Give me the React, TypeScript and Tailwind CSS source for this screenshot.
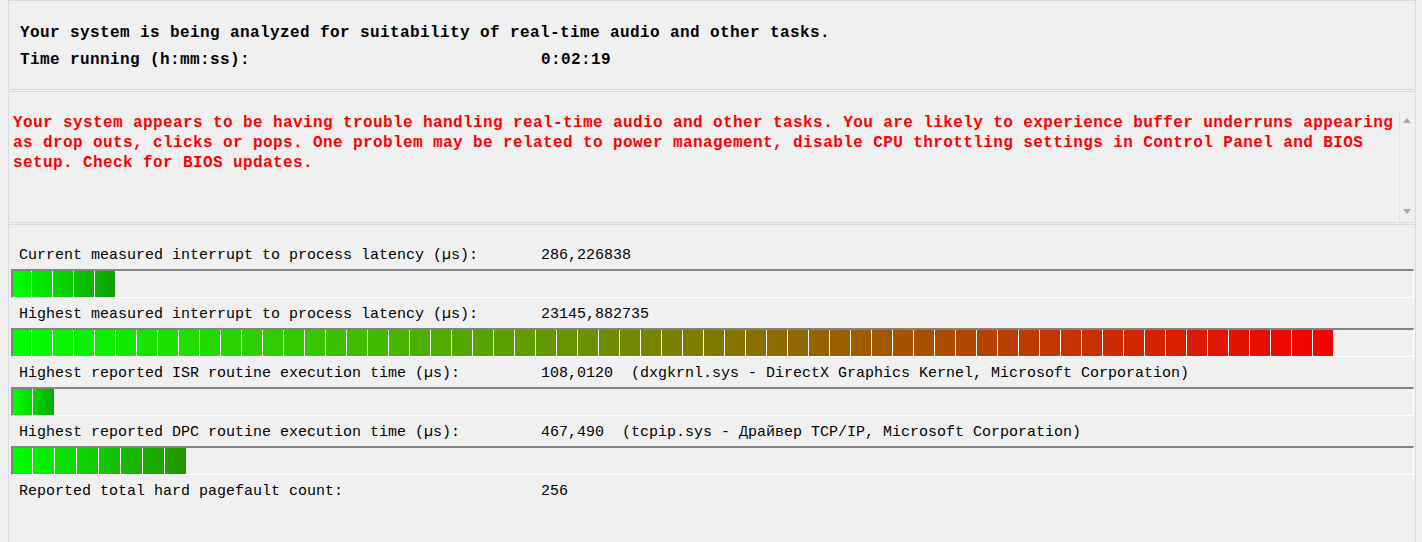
import React from "react";

type RGB = [number, number, number];

type BarSpec = { pitch: number; count: number; from: RGB; to: RGB };

const lerp = (a: RGB, b: RGB, t: number): string => {
  const c = a.map((v, i) => Math.round(v + (b[i] - v) * t));
  return `rgb(${c[0]},${c[1]},${c[2]})`;
};

function Bar({ spec }: { spec: BarSpec }) {
  const total = spec.count * spec.pitch - 3;
  const segs: { x0: number; w: number }[] = [];
  let x = 0;
  for (let k = 0; k < spec.count; k++) {
    const w = k === 0 ? spec.pitch - 3 : spec.pitch - 1;
    segs.push({ x0: x, w });
    x += w + 1;
  }
  return (
    <div className="mx-[2px] mr-[1px] h-[29px] border-t-2 border-l-2 border-t-[#828282] border-l-[#828282] border-b border-r border-b-white border-r-white bg-[#f0f0f0]">
      <div className="flex h-full gap-px bg-white" style={{ width: total }}>
        {segs.map((s, i) => (
          <div
            key={i}
            className="h-full shrink-0"
            style={{
              width: s.w,
              background: `linear-gradient(to right, ${lerp(spec.from, spec.to, s.x0 / total)}, ${lerp(
                spec.from,
                spec.to,
                (s.x0 + s.w) / total
              )})`,
            }}
          />
        ))}
      </div>
    </div>
  );
}

function Row({ label, value }: { label: string; value: string }) {
  return (
    <div className="flex h-[30px] items-center pl-[10px] pt-[2px] text-[15px] leading-none text-black whitespace-pre">
      <div className="w-[522px] shrink-0">{label}</div>
      <div>{value}</div>
    </div>
  );
}

function Triangle({ up }: { up: boolean }) {
  return (
    <svg width="8" height="5" viewBox="0 0 8 5" className="block">
      {up ? <polygon points="0,5 8,5 4,0" fill="#a6a6a6" /> : <polygon points="0,0 8,0 4,5" fill="#a6a6a6" />}
    </svg>
  );
}

export default function App() {
  const green: RGB = [0, 255, 0];
  const bars: BarSpec[] = [
    { pitch: 21, count: 5, from: green, to: [18, 158, 0] },
    { pitch: 21, count: 63, from: green, to: [245, 0, 0] },
    { pitch: 22, count: 2, from: green, to: [4, 172, 0] },
    { pitch: 22, count: 8, from: green, to: [36, 150, 0] },
  ];
  const rows = [
    { label: "Current measured interrupt to process latency (µs):", value: "286,226838" },
    { label: "Highest measured interrupt to process latency (µs):", value: "23145,882735" },
    {
      label: "Highest reported ISR routine execution time (µs):",
      value: "108,0120  (dxgkrnl.sys - DirectX Graphics Kernel, Microsoft Corporation)",
    },
    {
      label: "Highest reported DPC routine execution time (µs):",
      value: "467,490  (tcpip.sys - Драйвер TCP/IP, Microsoft Corporation)",
    },
  ];

  return (
    <div className="h-[542px] w-[1422px] overflow-hidden bg-[#f0f0f0] font-['Liberation_Mono','Courier_New',monospace] text-black">
      <div className="ml-[8px] flex w-[1408px] flex-col gap-px">
        {/* Top panel */}
        <div className="h-[90px] border border-[#d3dde5] pl-[11px] pt-[18px] text-[16px] font-bold tracking-[0.4px]">
          <div className="flex h-[27px] items-center whitespace-pre">
            Your system is being analyzed for suitability of real-time audio and other tasks.
          </div>
          <div className="flex h-[27px] items-center whitespace-pre">
            <div className="w-[521px] shrink-0">Time running (h:mm:ss):</div>
            <div>0:02:19</div>
          </div>
        </div>

        {/* Red message panel */}
        <div className="h-[132px] border border-[#d3dde5] px-[1px] pt-[19px]">
          <div className="flex h-[110px]">
            <div className="flex-1 pl-[3px] pt-[2px] text-[16px] font-bold leading-[20px] tracking-[0.4px] text-[#ff0000] whitespace-pre">
              <div>
                Your system appears to be having trouble handling real-time audio and other tasks. You are likely to experience buffer underruns appearing
              </div>
              <div>
                as drop outs, clicks or pops. One problem may be related to power management, disable CPU throttling settings in Control Panel and BIOS
              </div>
              <div>setup. Check for BIOS updates.</div>
            </div>
            <div className="flex w-[15px] flex-col items-center justify-between border-l border-[#e3e3e3] bg-[#f0f0f0] py-[7px]">
              <Triangle up />
              <Triangle up={false} />
            </div>
          </div>
        </div>

        {/* Measurements panel */}
        <div className="h-[330px] border border-[#d3dde5] pt-[14px]">
          {rows.map((r, i) => (
            <div key={i}>
              <Row label={r.label} value={r.value} />
              <Bar spec={bars[i]} />
            </div>
          ))}
          <Row label="Reported total hard pagefault count:" value="256" />
        </div>
      </div>
    </div>
  );
}
